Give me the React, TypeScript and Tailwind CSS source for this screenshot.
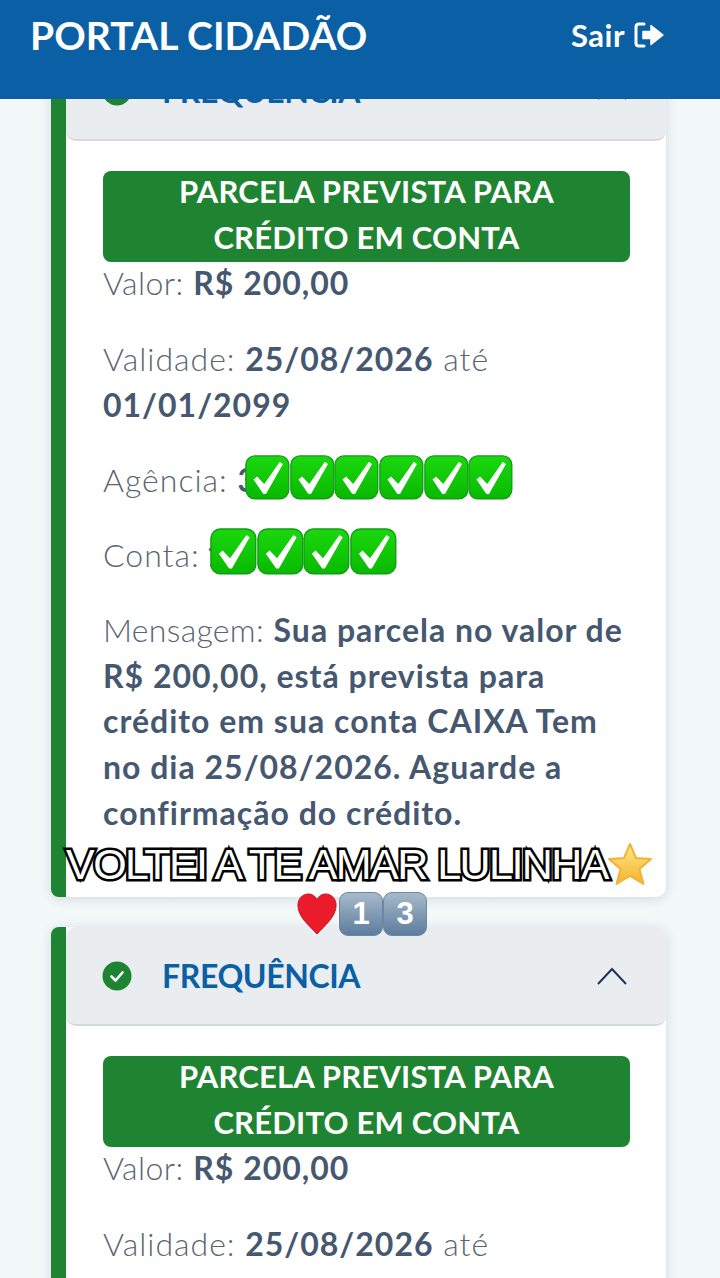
function CheckEmoji({ size }: { size: number }) {
    return (
        <svg width={size} height={size} viewBox="0 0 100 100" className="shrink-0">
            <defs>
                <linearGradient id="chk" x1="0" y1="0" x2="0" y2="1">
                    <stop offset="0" stopColor="#1ad80e" />
                    <stop offset="1" stopColor="#09b900" />
                </linearGradient>
            </defs>
            <rect x="2" y="2" width="96" height="96" rx="20" fill="url(#chk)" stroke="#119c17" strokeWidth="3" />
            <path d="M19 55 L27 48 L43 65 L78 15 L85 20 L47 87 L41 87 Z" fill="#ffffff" />
        </svg>
    );
}

function Keycap({ n }: { n: string }) {
    return (
        <div className="w-[44px] h-[44px] rounded-[9px] border border-[#6b87a3] bg-gradient-to-b from-[#a7bacb] to-[#5d7d9d] flex items-center justify-center text-white text-[31px] font-bold font-['Liberation_Sans',sans-serif]">
            {n}
        </div>
    );
}

function Field({ children, className = "mb-[29.6px]" }: { children: React.ReactNode; className?: string }) {
    return <p className={`whitespace-nowrap ${className}`}>{children}</p>;
}

function Card({ id }: { id: string }) {
    return (
        <section className="mx-[51px] w-[615px] border-l-[15px] border-[#1f8431] bg-white rounded-l-[8px] rounded-r-[10px] shadow-[0_2px_12px_rgba(60,80,100,0.18)]">
            <div className="h-[99px] flex items-center justify-between pl-[36px] pr-[38px] bg-[#e9edf0] rounded-[10px] border-b-2 border-[#d3d9de]">
                <div className="flex items-center gap-[30px]">
                    <svg width="30" height="30" viewBox="0 0 30 30">
                        <circle cx="15" cy="15" r="14.5" fill="#1f8431" />
                        <path d="M9.5 15.5 L13.5 19.5 L20.5 11.5" fill="none" stroke="#fff" strokeWidth="2.6" strokeLinecap="round" strokeLinejoin="round" />
                    </svg>
                    <span className="text-[32px] font-bold text-[#0b5fa5] tracking-[-0.4px]">FREQUÊNCIA</span>
                </div>
                <svg width="32" height="20" viewBox="0 0 32 20">
                    <path d="M2 18 L16 3 L30 18" fill="none" stroke="#1d3557" strokeWidth="2" />
                </svg>
            </div>
            <div className="pt-[30px] pl-[37px] pr-[30px] pb-[62px] text-[32px] tracking-[1px] leading-[45.6px] text-[#5b6570] font-light">
                <div className="flow-root h-[91px] rounded-[8px] bg-[#1f8431] text-white text-center text-[31px] tracking-[0.2px] font-bold mr-[6px]">
                    <div className="-mt-[2px]">
                        PARCELA PREVISTA PARA
                        <br />
                        CRÉDITO EM CONTA
                    </div>
                </div>
                <Field className="-mt-[2px] mb-[30.4px]">
                    <span className="tracking-[0.4px]">Valor:</span> <b className="font-bold text-[#465870]">R$ 200,00</b>
                </Field>
                <Field>
                    Validade: <b className="font-bold text-[#465870]">25/08/2026</b> até
                    <br />
                    <b className="font-bold text-[#465870]">{id}</b>
                </Field>
                <Field>
                    Agência: <b className="font-bold text-[#465870]">3</b>
                </Field>
                <Field>
                    Conta: <b className="font-bold text-[#465870] -ml-[3px]">1</b>
                </Field>
                <p className="whitespace-nowrap">
                    <span className="tracking-[0.3px]">Mensagem:</span> <b className="font-bold text-[#465870]">Sua parcela no valor de
                        <br />
                        R$ 200,00, está prevista para
                        <br />
                        crédito em sua conta CAIXA Tem
                        <br />
                        no dia 25/08/2026. Aguarde a
                        <br />
                        confirmação do crédito.</b>
                </p>
            </div>
        </section>
    );
}

export default function App() {
    return (
        <div className="relative w-[720px] h-[1278px] overflow-hidden bg-[#f3f8f9] font-['Lato',sans-serif]">
            <header className="absolute top-0 left-0 z-10 w-full h-[99px] bg-[#0b5fa5] text-white flex items-start justify-between pl-[30px] pr-[56px] pt-[10px]">
                <span className="text-[39px] tracking-[0.1px] leading-[50px] font-bold">PORTAL CIDADÃO</span>
                <span className="flex items-center gap-[9px] text-[31px] tracking-[0.5px] leading-[50px] font-bold">
                    Sair
                    <svg width="30" height="26" viewBox="0 0 30 26">
                        <path d="M10 2 H5 Q2 2 2 5 V21 Q2 24 5 24 H10" fill="none" stroke="#fff" strokeWidth="3" strokeLinecap="round" />
                        <path d="M9 9.5 H17 V3.5 L29 13 L17 22.5 V16.5 H9 Z" fill="#fff" stroke="#fff" strokeWidth="1.5" strokeLinejoin="round" />
                    </svg>
                </span>
            </header>

            <main className="pt-[42px] flex flex-col gap-[30px]">
                <Card id="01/01/2099" />
                <Card id="25/05/2026" />
            </main>

            <div className="absolute left-[245px] top-[455px] flex">
                {[0, 1, 2, 3, 4, 5].map((i) => <CheckEmoji key={i} size={44.7} />)}
            </div>
            <div className="absolute left-[210px] top-[528px] flex">
                {[0, 1, 2, 3].map((i) => <CheckEmoji key={i} size={46.7} />)}
            </div>

            <div className="absolute left-[66px] top-[839px] flex items-center">
                <span className="text-[43px] leading-[50px] font-['Liberation_Sans',sans-serif] tracking-[-1.55px] text-white [-webkit-text-stroke:5px_#000] [paint-order:stroke_fill] whitespace-nowrap">
                    VOLTEI A TE AMAR LULINHA
                </span>
                <svg width="46" height="44" viewBox="0 0 46 44" className="-ml-[1px]">
                    <defs>
                        <linearGradient id="star" x1="0" y1="0" x2="0" y2="1">
                            <stop offset="0" stopColor="#ffe98a" />
                            <stop offset="1" stopColor="#f4b32c" />
                        </linearGradient>
                    </defs>
                    <path d="M23 2 L29 16 L44 17 L32.5 27 L36.5 42 L23 34 L9.5 42 L13.5 27 L2 17 L17 16 Z" fill="url(#star)" stroke="#f0b437" strokeWidth="2" strokeLinejoin="round" />
                </svg>
            </div>
            <div className="absolute left-[295px] top-[892px] flex items-center">
                <svg width="44" height="42" viewBox="0 0 42 44">
                    <path d="M21 43 C13 34 1 25 1 13 C1 5 7 1 12 1 C16 1 19 3 21 7 C23 3 26 1 30 1 C35 1 41 5 41 13 C41 25 29 34 21 43 Z" fill="#ea1c2c" stroke="#c8101f" strokeWidth="1" />
                </svg>
                <Keycap n="1" />
                <Keycap n="3" />
            </div>
        </div>
    );
}
